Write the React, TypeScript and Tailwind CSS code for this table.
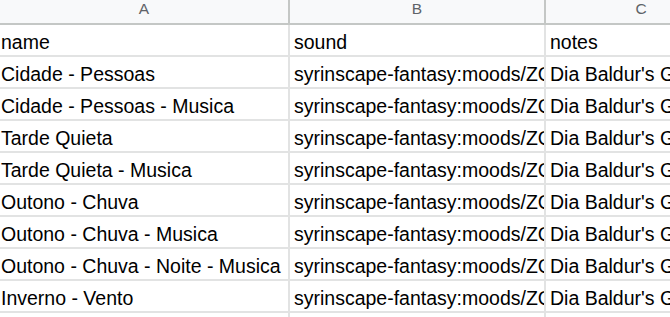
import React from 'react';

const rows: string[][] = [
  ['name', 'sound', 'notes'],
  ['Cidade - Pessoas', 'syrinscape-fantasy:moods/ZGVmYXVsdDo6MTA0', "Dia Baldur's Gate"],
  ['Cidade - Pessoas - Musica', 'syrinscape-fantasy:moods/ZGVmYXVsdDo6MTA1', "Dia Baldur's Gate"],
  ['Tarde Quieta', 'syrinscape-fantasy:moods/ZGVmYXVsdDo6MTA2', "Dia Baldur's Gate"],
  ['Tarde Quieta - Musica', 'syrinscape-fantasy:moods/ZGVmYXVsdDo6MTA3', "Dia Baldur's Gate"],
  ['Outono - Chuva', 'syrinscape-fantasy:moods/ZGVmYXVsdDo6MTA4', "Dia Baldur's Gate"],
  ['Outono - Chuva - Musica', 'syrinscape-fantasy:moods/ZGVmYXVsdDo6MTA5', "Dia Baldur's Gate"],
  ['Outono - Chuva - Noite - Musica', 'syrinscape-fantasy:moods/ZGVmYXVsdDo6MTEw', "Dia Baldur's Gate"],
  ['Inverno - Vento', 'syrinscape-fantasy:moods/ZGVmYXVsdDo6MTEx', "Dia Baldur's Gate"],
  ['', '', ''],
];

const App: React.FC = () => {
  return (
    <div className="w-[670px] h-[317px] overflow-hidden bg-white font-['Liberation_Sans',Arial,sans-serif]">
      <div className="grid grid-cols-[290px_256px_192px] w-[738px]">
        {/* column headers */}
        {['A', 'B', 'C'].map((letter) => (
          <div
            key={letter}
            className="h-[25px] bg-[#f8f9fa] border-b-2 border-r-2 border-[#c4c7c5] flex justify-center items-start text-[15.5px] leading-[17px] text-[#5f6368]"
          >
            {letter}
          </div>
        ))}

        {/* data rows */}
        {rows.map((row, i) =>
          row.map((cell, j) => (
            <div
              key={`${i}-${j}`}
              className={`h-[32px] border-b-2 border-r-2 border-[#e2e3e3] flex items-end pb-[2px] overflow-hidden whitespace-nowrap text-[19.5px] leading-[1.15] text-black ${
                j === 0 ? 'pl-[1px]' : 'pl-[4px]'
              }`}
            >
              {cell}
            </div>
          ))
        )}
      </div>
    </div>
  );
};

export default App;
